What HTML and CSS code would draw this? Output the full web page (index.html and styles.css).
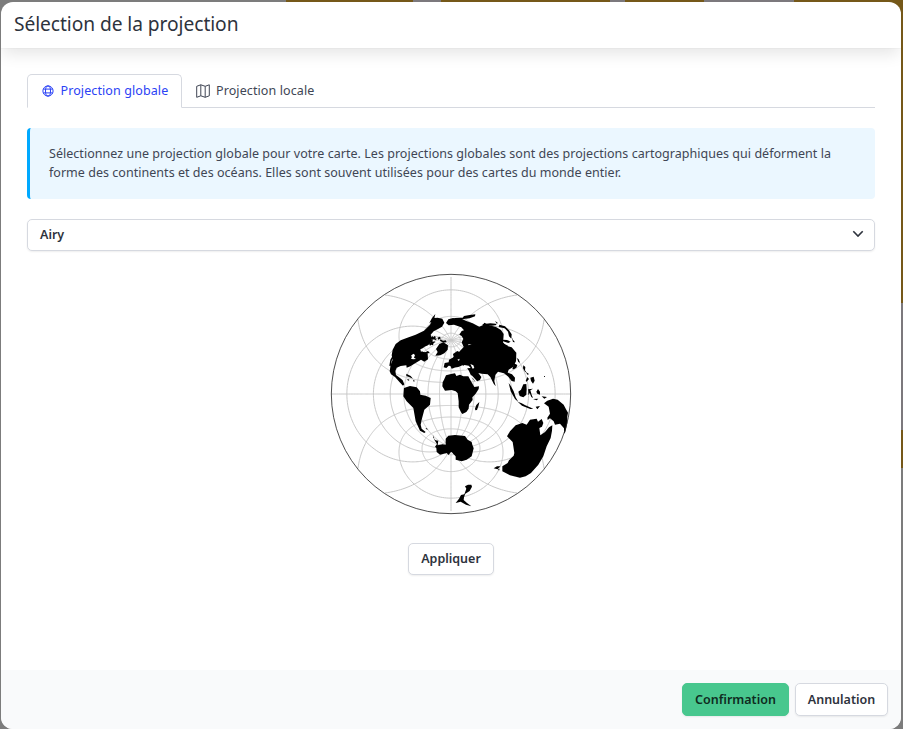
FILE: index.html
```
<!DOCTYPE html>
<html lang="fr">
<head>
<meta charset="utf-8">
<title>Sélection de la projection</title>
<link rel="stylesheet" href="styles.css">
</head>
<body>
<div class="modal">
  <header class="modal-head"><h1 class="modal-title">Sélection de la projection</h1></header>
  <main class="modal-body">
    <nav class="tabs">
      <a class="tab tab-active"><svg class="icon-globe" viewBox="0 0 12 12"><circle cx="6" cy="6" r="5.1"/><ellipse cx="6" cy="6" rx="2.5" ry="5.1"/><path d="M1.4 4.1h9.2M1.4 7.9h9.2"/></svg><span>Projection globale</span></a>
      <a class="tab"><svg class="icon-map" viewBox="0 0 14 14"><path d="M.7 2.3 4.8.8l4.4 1.5L13.3.8v11l-4.1 1.5-4.4-1.5-4.1 1.5zM4.8.8v11M9.2 2.3v11"/></svg><span>Projection locale</span></a>
    </nav>
    <div class="message"><p>Sélectionnez une projection globale pour votre carte. Les projections globales sont des projections cartographiques qui déforment la</p><p>forme des continents et des océans. Elles sont souvent utilisées pour des cartes du monde entier.</p></div>
    <button class="select"><span>Airy</span><svg class="chevron" viewBox="0 0 12 8"><path d="M1.3 1.3 6 6l4.7-4.7"/></svg></button>
    <svg class="globe" viewBox="15 15 726 726">
      <path id="graticule" class="graticule"/>
      <g class="land">
        <path d="M321 150l10-12-3 12 10-1 14 3 6 12-7 12-12 7-13 7-9 10 3 11-3 13-8 8-10 4-6 5-7 3 2 8 10 0 10 5 1 17-11 7-10-6-10 6-10 6-12 8-11 4-1-7-17 2-12 5-4 10 2 12 11 8 9 8 5 12-4 4-10-10-14-16-12-8-4-9 3-20 6-15-3-13 3-17 9-17 15-11 20-8 25-9 25-12 18-18 4-8-6 3z"/>
        <path d="M333 243l10-15 12-5 14 9-1 13-10 11-12 6-15 1 7-11z"/>
        <path d="M204 262l-8 13-3 18 4 2 3-17 7-12zM244 317l13 7 7 8-12-5-8-3zM248 333l5 2-1 3-5-2zM264 335l6 4-4 2z"/>
        <path d="M317 209l5-5 3 4 3-4 5 3-3 4 6 1-4 4-7-2 1 5 6 3-6 3-2 7-5-2-4 3-3-6 5-4-2-5 4-3zM337 209l7-3 4 5-8 4zM346 214l8 4 8-1 3 5-9 2-11-5zM297 254l12-5 5 5-8 3zM278 258l14-9 3 8-9 9z"/>
        <path d="M237 360L255 354 275 358 285 370 286 380 302 383 317 390 315 410 298 425 290 455 287 470 290 482 302 492 298 495 285 488 272 460 265 420 245 400 235 385z"/>
        <path d="M303 480l5 3-1 2-5-3zM325 502l3 10-3-2z"/>
        <path d="M326 512L332 517 340 518 338 532 352 529 362 530 362 512 370 503 390 501 420 504 428 515 440 522 442 530 446 541 440 565 425 575 410 580 392 575 392 565 385 558 380 552 377 553 371 561 365 555 345 560 335 552 334 540 330 536 336 528z"/>
        <g transform="translate(360 0)">
          <path d="M3 165l7-11 14-4 16 3 5-3 17 8 21 8 20 10 10-4 5-8 15 8 20 5 15 9 8 12-2 25 8 10 18 5 14 16-1 26-9 17-13 8-3 9 13 5 9 10-1 12-9-2-10-13-13-10-18-5-8 10-3 18 4 16-6-8-10-20-8-8-18-2-10-2 9 12-4 9-14 6-10-13-9-20-8-13-12-4-12 5-14 2-9-5-6-1-7 7-8-2 3-13 12-2 1-8 16-8 12-13 16-17-6-14 5-10-5-9-7-4 7-11 7-2-8-9-22-8-16 2z"/>
          <path d="M14 158l17-8 22-1 4-5 17-3 17-2-1 6-16 6-18 2-13 2zM111 169l25-3 16 1 3 4-15 2-23-1zM150 159l8 5-2 4zM163 170l17 5 12 12 8 12-1 13-7-7-3-14-10-10-18-4zM174 215l12 1 11 5-7 4-16-5zM200 207l4 8 6 8-6-1zM216 270l5 4 4 10-5-2zM207 286l10 5-3 8-7 5-5 0zM172 224l18 10-3 3-16-5z"/>
          <path d="M24 258l13-9 11 5-5 9-12 4-4 10-9-3 8-7zM14 289l9-7 4 6-6 4 8 7-9 3zM235 292l6 5-1 10 5 7-5-3-6-10zM242 312l9 5-2 5zM256 329l10-3 3 12-5 9-6-8zM247 327l5 6-7 8-3-2zM297 325l3-1 0 3-3 0z"/>
          <path d="M-8 355L-7 343 -3 335 3 322 18 318 30 316 34 324 45 320 55 325 70 325 78 340 88 357 102 355 101 363 92 377 82 388 83 396 72 410 71 422 64 432 52 438 48 433 41 418 41 400 38 376 32 370 20 366 0 368z"/>
          <path d="M90 422l4-11 9-9-2 10-5 14-5 1zM191 345l7 10 8 15 6 18 8 14-10-9-13-23zM220 371l8-6 7-16 9-1 1 16-1 16-9 8-11-4zM218 401l12 5 11 6 24 10-9 1-25-10zM249 364l15-2-8 5 4 13 4 10-5-3-5-12-4 7 0-12zM274 371l5-8 6 8 0 9-8-3zM290 385l16 2-8 5zM264 393l16-1-5 5zM272 416l13-2-8 10z"/>
          <path d="M307 398l17-6 14 3 18 15 7 14 6 10-2 11 0 20-6 27-4 5 0-16-12-14-15 3-4-10-11-9-7 5-1-7 8-12-4-21-14-10z"/>
          <path d="M186 505L195 490 212 472 232 465 245 470 255 455 275 452 279 461 290 453 295 465 291 476 283 480 286 502 300 492 312 478 322 472 321 488 317 510 305 535 295 565 280 590 258 615 242 625 225 629 195 622 172 610 172 595 188 585 192 577 206 563 208 555 205 535 203 522z"/>
          <path d="M146 601l10-6 10 0-8 9zM159 603l7 3-6 1z"/>
          <path d="M60 655l9-5 10 0 2 6-7 13-13 8-4 11-1 8 10 9 13 10-16-5-16-9-15 4 10-13 6-11 10-2 6-17z"/>
        </g>
      </g>
      <path class="waters" d="M410 300l8-9 13 2 6 7-11 1-5 5zM436 288l9 4 3 8-5 2zM258 263l7-6 5 4-3 8 6 4-9 1-6-2 3-5zM323 214l7 4-7 4zM397 275l7-3-2 7zM440 322l15 16 5 11-6-3-9-14-10-7zM440 228l-10 4 0-3z"/>
      <circle class="sphere" cx="378" cy="378" r="359"/>
    </svg>
    <button class="button">Appliquer</button>
  </main>
  <footer class="modal-foot"><button class="button button-success">Confirmation</button><button class="button button-cancel">Annulation</button></footer>
</div>
<script src="graticule.js"></script>
</body>
</html>
```
FILE: styles.css
```
* { box-sizing: border-box; }
body {
  margin: 0; height: 729px; padding: 2px 2px 0 1px; overflow: hidden;
  font-family: "Noto Sans", "Open Sans", sans-serif; font-size: 12.5px; color: #404654;
  background:
    linear-gradient(#755819 0 303px, #7c797d 303px 430px, #755819 430px 468px, #7c7c7c 468px) right / 2px 100% no-repeat,
    linear-gradient(90deg, #7c7c7c 0 286px, #755819 286px 413px, #7c797d 413px 441px, #755819 441px 610px, #7c797d 610px 625px, #755819 625px 704px, #7c797d 704px 794px, #755819 794px) top / 100% 12px no-repeat, #7c7c7c;
}
.modal { height: 727px; display: flex; flex-direction: column; overflow: hidden; border-radius: 12px; background: #fff; }
.modal-head { height: 46px; flex: none; padding: 0 13px; display: flex; align-items: center; box-shadow: 0 8px 16px -2px rgba(10,10,10,.1), 0 0 0 1px rgba(10,10,10,.02); }
.modal-title { margin: 0; padding-bottom: 3px; font-size: 19.2px; line-height: 24px; font-weight: 400; color: #2e333d; letter-spacing: -.07px; white-space: nowrap; }
.modal-body { flex: 1; padding: 26px 26px 0; display: flex; flex-direction: column; align-items: stretch; }
.tabs { height: 34px; flex: none; display: flex; border-bottom: 1px solid #d6d9e0; }
.tab { height: 34px; display: flex; align-items: center; padding: 0 13px; border: 1px solid transparent; white-space: nowrap; letter-spacing: .1px; }
.tab span { padding-bottom: 1px; }
.tab-active { width: 155px; color: #2b42f5; background: #fff; border-color: #d6d9e0; border-bottom-color: #fff; border-radius: 5px 5px 0 0; }
.tab svg { fill: none; stroke: currentColor; flex: none; }
.icon-globe { width: 12px; height: 12px; margin: 0 7px 0 .5px; stroke-width: 1; }
.icon-map { width: 14px; height: 14px; margin-right: 6px; stroke-width: 1; }
.message { height: 71px; flex: none; margin-top: 20px; padding: 16px 19px; border-left: 3px solid #00a9ff; border-radius: 4px; background: #ebf7ff; line-height: 19.2px; white-space: nowrap; letter-spacing: .032px; }
.message p { margin: 0; }
button { font: inherit; color: #2e333d; background: #fff; border: 1px solid #d6d9e0; border-radius: 5px; box-shadow: 0 1px 2px rgba(10,10,10,.07); font-weight: 600; }
.select { height: 32px; flex: none; margin-top: 20px; padding: 0 10px 2px 12px; display: flex; align-items: center; justify-content: space-between; }
.chevron { width: 12px; height: 8px; fill: none; stroke: #2e333d; stroke-width: 1.6; }
.globe { width: 242px; height: 242px; flex: none; align-self: center; margin: 22px 0 0; }
.graticule { fill: none; stroke: #c8c8c8; stroke-width: 3; }
.land { fill: #000; }
.waters { fill: #fff; }
.sphere { fill: none; stroke: #222; stroke-width: 2.4; }
.button { width: 86px; height: 32px; flex: none; align-self: center; margin-top: 28px; padding: 0 0 1px; }
.modal-foot { height: 59px; flex: none; padding: 0 13px; display: flex; align-items: center; justify-content: flex-end; gap: 6px; background: #f9fafb; }
.modal-foot .button { height: 33px; margin: 0; }
.modal-foot .button-success { width: 107px; background: #48c78e; border-color: #48c78e; color: #0f2c1f; }
.modal-foot .button-cancel { width: 93px; }
```
FILE: graticule.js
```
// Airy projection, clipped at 147 degrees from the centre.
const rad = Math.PI / 180;
const limit = Math.cos(147 * rad);
const b = 2 * Math.log(Math.SQRT1_2);
const edge = radial(limit) * Math.sin(147 * rad);

function radial(c) {
  const inner = 1 - c < 1e-6 ? -0.5 : Math.log((1 + c) / 2) / (1 - c);
  return -(inner + b / (1 + c));
}

function line(points) {
  let d = '', pen = 'M';
  for (const [lon, lat] of points) {
    const x = lon * rad, y = lat * rad;
    const c = Math.cos(y) * Math.cos(x);
    if (c < limit) { pen = 'M'; continue; }
    const k = radial(c) * 359 / edge;
    d += pen + (378 + k * Math.cos(y) * Math.sin(x)).toFixed(2) + ' ' + (378 - k * Math.sin(y)).toFixed(2);
    pen = 'L';
  }
  return d;
}

const range = (from, to, step) => Array.from({ length: Math.round((to - from) / step) + 1 }, (_, i) => from + i * step);
let path = '';
for (const lon of range(-180, 160, 20)) path += line(range(-90, 90, 1).map(lat => [lon, lat]));
for (const lat of range(-80, 80, 20)) path += line(range(-180, 180, 1).map(lon => [lon, lat]));
document.getElementById('graticule').setAttribute('d', path);
```
